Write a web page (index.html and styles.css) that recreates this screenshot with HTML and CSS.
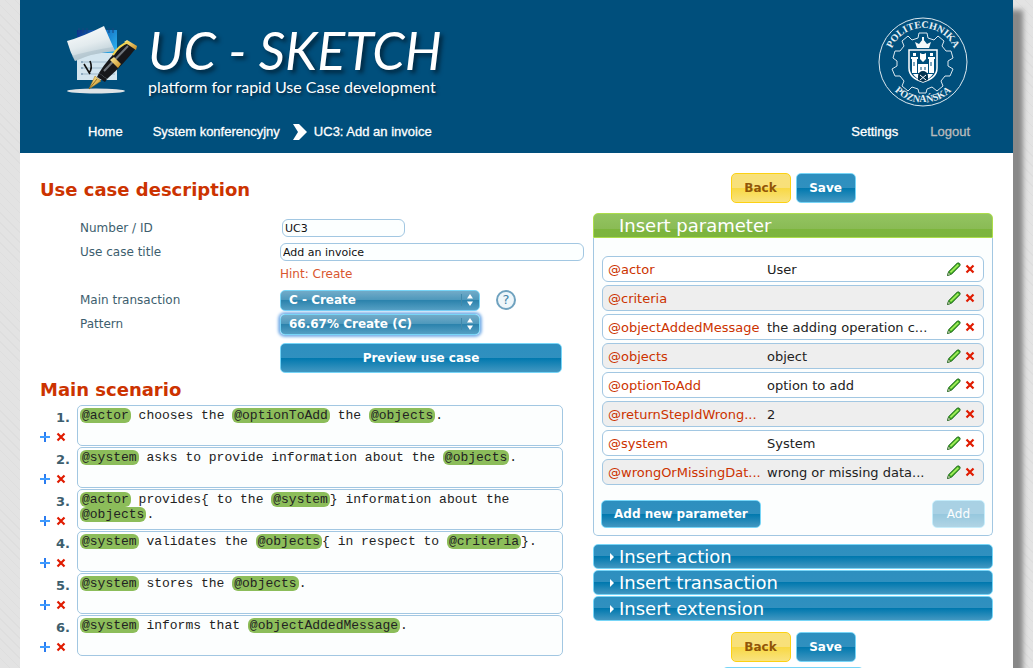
FILE: index.html
```
<!DOCTYPE html>
<html lang="en">
<head>
    <meta charset="UTF-8">
    <title>UC - Sketch</title>
    <link rel="stylesheet" href="styles.css">
</head>
<body>
    <!-- Shared icons -->
    <svg class="sprite" width="0" height="0" aria-hidden="true">
        <symbol id="i-plus" viewBox="0 0 10 10">
            <path d="M5 0v10" stroke="#2b7cf0" stroke-width="2"/>
            <path d="M0 5h10" stroke="#3f9bff" stroke-width="2"/>
        </symbol>
        <symbol id="i-delete" viewBox="0 0 10 10">
            <path d="M1.500 1.500l7 7M8.500 1.500l-7 7" stroke="#e01b00" stroke-width="2.200"/>
        </symbol>
        <symbol id="i-pencil" viewBox="0 0 14 14">
            <path d="M.5 13.500l1.200-4L10 1.300Q11.200.3 12.600 1.500Q13.800 2.800 12.700 4L4.600 12.200z" fill="#35a51a" stroke="#2b6b2a" stroke-width=".9"/>
            <path d="M3.400 10.400L11.400 2.600" stroke="#a4ee5c" stroke-width="1.800"/>
            <path d="M.5 13.500l1-3.300 2.300 2.200z" fill="#e8efc9" stroke="#1d5a1c" stroke-width=".6"/>
        </symbol>
        <symbol id="i-updown" viewBox="0 0 6 12">
            <path d="M3 0l3 4.500H0zM3 12L0 7.500h6z" fill="#fff"/>
        </symbol>
        <symbol id="i-arrow" viewBox="0 0 4 8">
            <path d="M0 0l4 4-4 4z" fill="#fff"/>
        </symbol>
    </svg>

    <div class="page">
        <header class="header">
            <div class="brand">
                <svg class="logo" viewBox="0 0 78 78" width="78" height="78" aria-hidden="true">
                    <defs>
                        <linearGradient id="cover" x1="0" y1="0" x2="1" y2="1">
                            <stop offset="0" stop-color="#0a2f86"/><stop offset=".4" stop-color="#1679c9"/><stop offset=".7" stop-color="#2cb2ee"/>
                        </linearGradient>
                        <linearGradient id="sheet" x1="0" y1="0" x2=".4" y2="1">
                            <stop offset="0" stop-color="#fff"/><stop offset=".6" stop-color="#e3ebee"/><stop offset="1" stop-color="#b8cbd4"/>
                        </linearGradient>
                        <linearGradient id="gold" x1="0" y1="0" x2="1" y2="1">
                            <stop offset="0" stop-color="#fff0a0"/><stop offset="1" stop-color="#c58a1e"/>
                        </linearGradient>
                    </defs>
                    <ellipse cx="32" cy="71" rx="29" ry="2.500" fill="#dfe3e5"/>
                    <path d="M13 10h40v50H13z" fill="url(#cover)"/>
                    <path d="M15 8v5M19 8v5M23 8v5M41 8v5M45 8v5M49 8v5" stroke="#19457f"/>
                    <path d="M13 33h40v27H13z" fill="#d3e5ef"/>
                    <path d="M19 42h32M19 48h32M19 54h32" stroke="#9fb9cb"/>
                    <path d="M17 42h2M17 48h2M17 54h2" stroke="#4a7392"/>
                    <path d="M11 41Q28 33 51 31Q46 20 40 6Q18 17 3 21Q6 32 11 41z" fill="url(#sheet)"/>
                    <path d="M11 41Q28 33 51 31L49 27Q24 31 8 36z" fill="#9db4c0" opacity=".4"/>
                    <path d="M20 44l6 10M26 41q3 7-1 12" stroke="#111" stroke-width="1.600" fill="none"/>
                    <path d="M25 69l6-13 6 5z" fill="url(#gold)" stroke="#a5761a" stroke-width=".5"/>
                    <path d="M35 53Q44 38 61 23L72 28Q60 44 43 59z" fill="#17171a"/>
                    <path d="M40 51L64 26" stroke="#70757b" stroke-width="2"/>
                    <path d="M50 37l7 7-3 4-8-8z" fill="url(#gold)"/>
                    <path d="M35 53l8 6-2 3-8-5z" fill="#17171a"/>
                    <path d="M60 22l3-2 10 6-1 4z" fill="url(#gold)"/>
                    <path d="M49 35Q55 25 65 22" stroke="#f2d451" stroke-width="2" fill="none"/>
                    <path d="M25 69l8-10" stroke="#7a5510" stroke-width=".8"/>
                </svg>
                <div class="brand-text">
                    <div class="brand-name">UC - SKETCH</div>
                    <div class="brand-tagline">platform for rapid Use Case development</div>
                </div>
            </div>
            <svg class="seal" viewBox="0 0 90 90" width="90" height="90" role="img" aria-label="Politechnika Poznańska">
                <defs>
                    <path id="seal-top" d="M11 45a34 34 0 0 1 68 0"/>
                    <path id="seal-bottom" d="M4.500 45a40.500 40.500 0 0 0 81 0"/>
                </defs>
                <circle cx="45" cy="45" r="44" fill="none" stroke="#dce8ef"/>
                <text class="seal-text"><textPath href="#seal-top" startOffset="50%" text-anchor="middle">POLITECHNIKA</textPath></text>
                <text class="seal-text"><textPath href="#seal-bottom" startOffset="50%" text-anchor="middle">POZNAŃSKA</textPath></text>
                <!-- Gear ring -->
                <path d="M41 16h8l1 5 6 2 4-4 6 5-2 5 4 5 5 0 2 7-5 3v5l5 3-3 7-5 0-4 5 2 5-6 5-5-4-5 2-1 4h-7l-1-4-6-2-4 4-6-5 2-5-4-5-5 0-3-7 5-3v-5l-4-3 2-7 5 0 4-5-2-5 6-5 4 4 6-2z" fill="none" stroke="#dce8ef"/>
                <!-- Crown -->
                <path d="M39 31l-2-6 4 2 4-5 4 5 4-2-2 6zM44 20h2v3h-2z" fill="#f4f8fa"/>
                <!-- Shield -->
                <path d="M31 33h28v18q0 10-14 14-14-4-14-14z" fill="#004f7c" stroke="#fff" stroke-width="1.500"/>
                <path d="M34 42h5v14h-5zM51 42h5v14h-5zM40 47h10v9H40zM33 40h7v2h-7zM50 40h7v2h-7zM35 36h3v3h-3zM52 36h3v3h-3zM42 36l2 1h2l2-1v6l-3 3-3-3z" fill="#fff"/>
                <path d="M35 57h20q-3 5-10 7-7-2-10-7z" fill="#fff"/>
                <path d="M36 45v4M53 45v4M43 50v3M47 50v3" stroke="#004f7c"/>
                <path d="M40 63v-4a5 5 0 0 1 10 0v4l-5 2z" fill="#04324e"/>
                <path d="M42 58l6 5M48 58l-6 5" stroke="#fff"/>
            </svg>
            <nav class="nav">
                <a class="nav-home" href="#">Home</a>
                <a href="#">System konferencyjny</a>
                <svg class="chevron" viewBox="0 0 16 16" width="16" height="16" aria-hidden="true"><path d="M1 0h6l8 8-8 8H1l5-8z" fill="#fff"/></svg>
                <a href="#">UC3: Add an invoice</a>
                <a class="nav-settings" href="#">Settings</a>
                <a class="nav-logout" href="#">Logout</a>
            </nav>
        </header>

        <main class="content">
            <div class="left">
                <h2>Use case description</h2>
                <form class="details">
                    <label for="ucId">Number / ID</label>
                    <div class="field"><input type="text" class="input-id" id="ucId" value="UC3"></div>
                    <label for="ucTitle">Use case title</label>
                    <div class="field"><input type="text" class="input-title" id="ucTitle" value="Add an invoice"></div>
                    <div class="hint">Hint: Create</div>
                    <label for="transaction">Main transaction</label>
                    <div class="field">
                        <div class="select">
                            <select id="transaction"><option>C - Create</option></select>
                            <svg width="6" height="12" aria-hidden="true"><use href="#i-updown"/></svg>
                        </div>
                        <button type="button" class="help" aria-label="Help">?</button>
                    </div>
                    <label for="pattern">Pattern</label>
                    <div class="field">
                        <div class="select select-focused">
                            <select id="pattern"><option>66.67% Create (C)</option></select>
                            <svg width="6" height="12" aria-hidden="true"><use href="#i-updown"/></svg>
                        </div>
                    </div>
                    <button type="button" class="btn preview">Preview use case</button>
                </form>

                <h2>Main scenario</h2>
                <ol class="steps">
                    <li>
                        <span class="num">1.</span>
                        <span class="tools"><button type="button" aria-label="Add step"><svg width="10" height="10"><use href="#i-plus"/></svg></button><button type="button" aria-label="Delete step"><svg width="10" height="10"><use href="#i-delete"/></svg></button></span>
                        <div class="step" role="textbox" aria-label="Step 1" contenteditable="true" spellcheck="false"><mark>@actor</mark> chooses the <mark>@optionToAdd</mark> the <mark>@objects</mark>.</div>
                    </li>
                    <li>
                        <span class="num">2.</span>
                        <span class="tools"><button type="button" aria-label="Add step"><svg width="10" height="10"><use href="#i-plus"/></svg></button><button type="button" aria-label="Delete step"><svg width="10" height="10"><use href="#i-delete"/></svg></button></span>
                        <div class="step" role="textbox" aria-label="Step 2" contenteditable="true" spellcheck="false"><mark>@system</mark> asks to provide information about the <mark>@objects</mark>.</div>
                    </li>
                    <li>
                        <span class="num">3.</span>
                        <span class="tools"><button type="button" aria-label="Add step"><svg width="10" height="10"><use href="#i-plus"/></svg></button><button type="button" aria-label="Delete step"><svg width="10" height="10"><use href="#i-delete"/></svg></button></span>
                        <div class="step" role="textbox" aria-label="Step 3" contenteditable="true" spellcheck="false"><mark>@actor</mark> provides{ to the <mark>@system</mark>} information about the <mark>@objects</mark>.</div>
                    </li>
                    <li>
                        <span class="num">4.</span>
                        <span class="tools"><button type="button" aria-label="Add step"><svg width="10" height="10"><use href="#i-plus"/></svg></button><button type="button" aria-label="Delete step"><svg width="10" height="10"><use href="#i-delete"/></svg></button></span>
                        <div class="step" role="textbox" aria-label="Step 4" contenteditable="true" spellcheck="false"><mark>@system</mark> validates the <mark>@objects</mark>{ in respect to <mark>@criteria</mark>}.</div>
                    </li>
                    <li>
                        <span class="num">5.</span>
                        <span class="tools"><button type="button" aria-label="Add step"><svg width="10" height="10"><use href="#i-plus"/></svg></button><button type="button" aria-label="Delete step"><svg width="10" height="10"><use href="#i-delete"/></svg></button></span>
                        <div class="step" role="textbox" aria-label="Step 5" contenteditable="true" spellcheck="false"><mark>@system</mark> stores the <mark>@objects</mark>.</div>
                    </li>
                    <li>
                        <span class="num">6.</span>
                        <span class="tools"><button type="button" aria-label="Add step"><svg width="10" height="10"><use href="#i-plus"/></svg></button><button type="button" aria-label="Delete step"><svg width="10" height="10"><use href="#i-delete"/></svg></button></span>
                        <div class="step" role="textbox" aria-label="Step 6" contenteditable="true" spellcheck="false"><mark>@system</mark> informs that <mark>@objectAddedMessage</mark>.</div>
                    </li>
                </ol>
            </div>

            <div class="right">
                <div class="actions">
                    <button type="button" class="btn btn-back">Back</button>
                    <button type="button" class="btn">Save</button>
                </div>

                <button type="button" class="bar bar-open" aria-expanded="true">Insert parameter</button>
                <div class="panel">
                    <ul class="params">
                        <li><span class="name">@actor</span><span class="value">User</span><button type="button" aria-label="Edit"><svg width="14" height="14"><use href="#i-pencil"/></svg></button><button type="button" aria-label="Delete"><svg width="10" height="10"><use href="#i-delete"/></svg></button></li>
                        <li><span class="name">@criteria</span><span class="value"></span><button type="button" aria-label="Edit"><svg width="14" height="14"><use href="#i-pencil"/></svg></button><button type="button" aria-label="Delete"><svg width="10" height="10"><use href="#i-delete"/></svg></button></li>
                        <li><span class="name">@objectAddedMessage</span><span class="value">the adding operation c...</span><button type="button" aria-label="Edit"><svg width="14" height="14"><use href="#i-pencil"/></svg></button><button type="button" aria-label="Delete"><svg width="10" height="10"><use href="#i-delete"/></svg></button></li>
                        <li><span class="name">@objects</span><span class="value">object</span><button type="button" aria-label="Edit"><svg width="14" height="14"><use href="#i-pencil"/></svg></button><button type="button" aria-label="Delete"><svg width="10" height="10"><use href="#i-delete"/></svg></button></li>
                        <li><span class="name">@optionToAdd</span><span class="value">option to add</span><button type="button" aria-label="Edit"><svg width="14" height="14"><use href="#i-pencil"/></svg></button><button type="button" aria-label="Delete"><svg width="10" height="10"><use href="#i-delete"/></svg></button></li>
                        <li><span class="name">@returnStepIdWrong...</span><span class="value">2</span><button type="button" aria-label="Edit"><svg width="14" height="14"><use href="#i-pencil"/></svg></button><button type="button" aria-label="Delete"><svg width="10" height="10"><use href="#i-delete"/></svg></button></li>
                        <li><span class="name">@system</span><span class="value">System</span><button type="button" aria-label="Edit"><svg width="14" height="14"><use href="#i-pencil"/></svg></button><button type="button" aria-label="Delete"><svg width="10" height="10"><use href="#i-delete"/></svg></button></li>
                        <li><span class="name">@wrongOrMissingDat...</span><span class="value">wrong or missing data...</span><button type="button" aria-label="Edit"><svg width="14" height="14"><use href="#i-pencil"/></svg></button><button type="button" aria-label="Delete"><svg width="10" height="10"><use href="#i-delete"/></svg></button></li>
                    </ul>
                    <div class="panel-buttons">
                        <button type="button" class="btn">Add new parameter</button>
                        <button type="button" class="btn" disabled>Add</button>
                    </div>
                </div>

                <div class="bars">
                    <button type="button" class="bar" aria-expanded="false"><svg width="4" height="8"><use href="#i-arrow"/></svg>Insert action</button>
                    <button type="button" class="bar" aria-expanded="false"><svg width="4" height="8"><use href="#i-arrow"/></svg>Insert transaction</button>
                    <button type="button" class="bar" aria-expanded="false"><svg width="4" height="8"><use href="#i-arrow"/></svg>Insert extension</button>
                </div>

                <div class="actions">
                    <button type="button" class="btn btn-back">Back</button>
                    <button type="button" class="btn">Save</button>
                </div>
                <div class="status"></div>
            </div>
        </main>
    </div>
</body>
</html>
```
FILE: styles.css
```
* {
    box-sizing: border-box;
}
body {
    margin: 0;
    padding: 0 20px;
    background: repeating-linear-gradient(45deg, #e3e3e3 0, #e3e3e3 6px, #dedede 6px, #dedede 7px);
    font-family: Verdana, "DejaVu Sans", sans-serif;
    font-size: 12px;
    color: #222;
}
button {
    padding: 0;
    border: none;
    background: none;
    font-family: inherit;
    cursor: pointer;
}
svg {
    display: block;
}
.sprite {
    position: absolute;
}
.page {
    min-height: 100vh;
    background: #fff;
    box-shadow: 10px 10px 5px #888;
}

/* Header */
.header {
    display: flex;
    flex-wrap: wrap;
    justify-content: space-between;
    padding: 17px 43px 9px 44px;
    background: #004f7c;
    color: #fff;
}
.brand {
    display: flex;
    gap: 6px;
    padding-top: 3px;
}
.brand-name {
    height: 56px;
    font-family: Lato, sans-serif;
    font-style: italic;
    font-size: 52px;
    line-height: 60px;
    text-shadow: 3px 3px 4px #00263d;
}
.brand-tagline {
    font-family: Lato, sans-serif;
    font-size: 16px;
    line-height: 22px;
    text-shadow: 2px 2px 3px #00263d;
}
.seal {
    margin-right: 2px;
}
.seal-text {
    font-family: "Liberation Serif", serif;
    font-size: 10px;
    font-weight: bold;
    fill: #e8f0f5;
}
.nav {
    display: flex;
    align-items: center;
    width: 100%;
    margin-top: 13px;
    padding-left: 24px;
    font-family: "Liberation Sans", Arial, sans-serif;
    font-size: 13px;
    line-height: 24px;
}
.nav a {
    color: #fff;
    text-decoration: none;
    -webkit-text-stroke: 0.3px;
}
.nav .nav-home {
    margin-right: 30px;
}
.chevron {
    margin: 0 6px 0 12px;
}
.nav .nav-settings {
    margin-left: auto;
}
.nav .nav-logout {
    margin-left: 32px;
    color: #bbb;
}

/* Columns */
.content {
    display: grid;
    grid-template-columns: 1fr 400px;
    gap: 9px;
    padding: 20px;
}
h2 {
    margin: 5px 0 3px;
    font-size: 18px;
    line-height: 24px;
    color: #cc3300;
}

/* Use case details */
.details {
    display: grid;
    grid-template-columns: 200px 1fr;
    grid-auto-rows: minmax(24px, auto);
    align-items: center;
    margin-top: 14px;
    padding-left: 40px;
    color: #3d5e6e;
}
.field {
    display: flex;
    align-items: center;
    gap: 16px;
}
input {
    height: 18px;
    padding: 0 2px;
    border: 1px solid #a2c7e2;
    border-radius: 6px;
    background: #fcffff;
    font-family: inherit;
    font-size: 11px;
    color: #111;
}
.input-id {
    width: 123px;
    margin-left: 2px;
}
.input-title {
    width: 100%;
}
.hint {
    grid-column: 2;
    align-self: start;
    line-height: 20px;
    color: #d9562f;
}
.select {
    display: grid;
    grid-template-columns: 1fr 18px;
    align-items: center;
    width: 200px;
    border: 1px solid #77d5f7;
    border-radius: 5px;
    background: linear-gradient(#72abc8 0, #4b97bb 50%, #2c83ad 50%, #559fc3 100%);
}
.select select {
    grid-column: 1 / -1;
    grid-row: 1;
    height: 19px;
    padding: 0 8px;
    border: none;
    appearance: none;
    outline: none;
    background: none;
    font-family: inherit;
    font-size: 12px;
    font-weight: bold;
    color: #fff;
}
.select svg {
    grid-column: 2;
    grid-row: 1;
    width: 17px;
    height: 12px;
    padding-left: 5px;
    padding-right: 5px;
    border-left: 1px solid #4089ab;
    pointer-events: none;
}
.select-focused {
    box-shadow: 0 0 3px 2px #7ab0e8;
}
.help {
    width: 20px;
    height: 20px;
    border: 2px solid #6fa2bf;
    border-radius: 50%;
    background: #eef6fa;
    font-size: 13px;
    line-height: 14px;
    color: #4182a8;
}

/* Buttons */
.btn {
    height: 30px;
    padding: 0 12px;
    border: 1px solid #77d5f7;
    border-radius: 5px;
    background: linear-gradient(#2d8fbf 0, #3090bf 50%, #0078ae 50%, #4297c1 100%);
    font-size: 12px;
    font-weight: bold;
    color: #fff;
}
.btn:disabled {
    padding: 0 14px;
    opacity: 0.4;
    font-weight: normal;
}
.btn-back {
    border-color: #fcd113;
    background: linear-gradient(#f8e17a 0, #f8e07a 50%, #f8d843 50%, #f9e37f 100%);
    color: #915608;
}
.preview {
    grid-column: 2;
    width: 282px;
    margin-top: 7px;
}

/* Scenario steps */
.steps {
    display: flex;
    flex-direction: column;
    gap: 1px;
    margin: 0;
    padding: 0;
    list-style: none;
}
.steps li {
    display: grid;
    grid-template-columns: 37px 486px;
    grid-template-rows: 23px 18px;
}
.num {
    padding: 5px 7px 0 0;
    font-size: 13px;
    font-weight: bold;
    line-height: 16px;
    text-align: right;
    color: #3d5e6e;
}
.tools {
    display: flex;
    align-items: center;
    gap: 6px;
}
.step {
    grid-column: 2;
    grid-row: 1 / 3;
    padding: 2px;
    border: 1px solid #a2c7e2;
    border-radius: 5px;
    background: #fcfefe;
    font-family: "Liberation Mono", "Courier New", monospace;
    font-size: 13px;
    line-height: 15px;
    color: #222;
}
mark {
    padding: 0 2px;
    border-radius: 6px;
    background: #8cbd5a;
    color: inherit;
}

/* Right column */
.actions {
    display: flex;
    justify-content: center;
    gap: 5px;
    margin-bottom: 10px;
}
.actions .btn {
    width: 60px;
    padding: 0;
}
.bar {
    display: flex;
    align-items: center;
    gap: 5px;
    width: 100%;
    height: 25px;
    padding: 0 16px;
    border: 1px solid #77d5f7;
    border-radius: 5px;
    background: linear-gradient(#2d8fbf 0, #3090bf 50%, #0078ae 50%, #4297c1 100%);
    font-size: 18px;
    line-height: 23px;
    color: #fff;
}
.bar-open {
    padding-left: 25px;
    border-color: #acdd4a;
    border-radius: 5px 5px 0 0;
    background: linear-gradient(#93c461 0, #8abb55 65%, #7cb53c 65%, #7cb43e 100%);
}
.panel {
    padding: 18px 7px 7px;
    border: 1px solid #a2c7e2;
    border-top: none;
    border-radius: 0 0 5px 5px;
    background: #fcfefe;
}
.params {
    display: flex;
    flex-direction: column;
    gap: 3px;
    margin: 0 1px;
    padding: 0;
    list-style: none;
}
.params li {
    display: grid;
    grid-template-columns: 155px 1fr 14px 10px;
    column-gap: 4px;
    align-items: center;
    height: 26px;
    padding: 0 8px 0 5px;
    border: 1px solid #a2c7e2;
    border-radius: 6px;
    background: #fff;
    font-size: 13px;
    white-space: nowrap;
}
.params li:nth-child(even) {
    background: #eee;
}
.params .name {
    color: #cc3300;
}
.panel-buttons {
    display: flex;
    justify-content: space-between;
    margin-top: 15px;
}
.panel-buttons .btn {
    height: 28px;
}
.bars {
    display: flex;
    flex-direction: column;
    gap: 1px;
    margin: 8px 0 11px;
}
.status {
    width: 142px;
    height: 10px;
    margin: -5px auto 0;
    border: 1px solid #77d5f7;
    border-radius: 5px 5px 0 0;
}
```
